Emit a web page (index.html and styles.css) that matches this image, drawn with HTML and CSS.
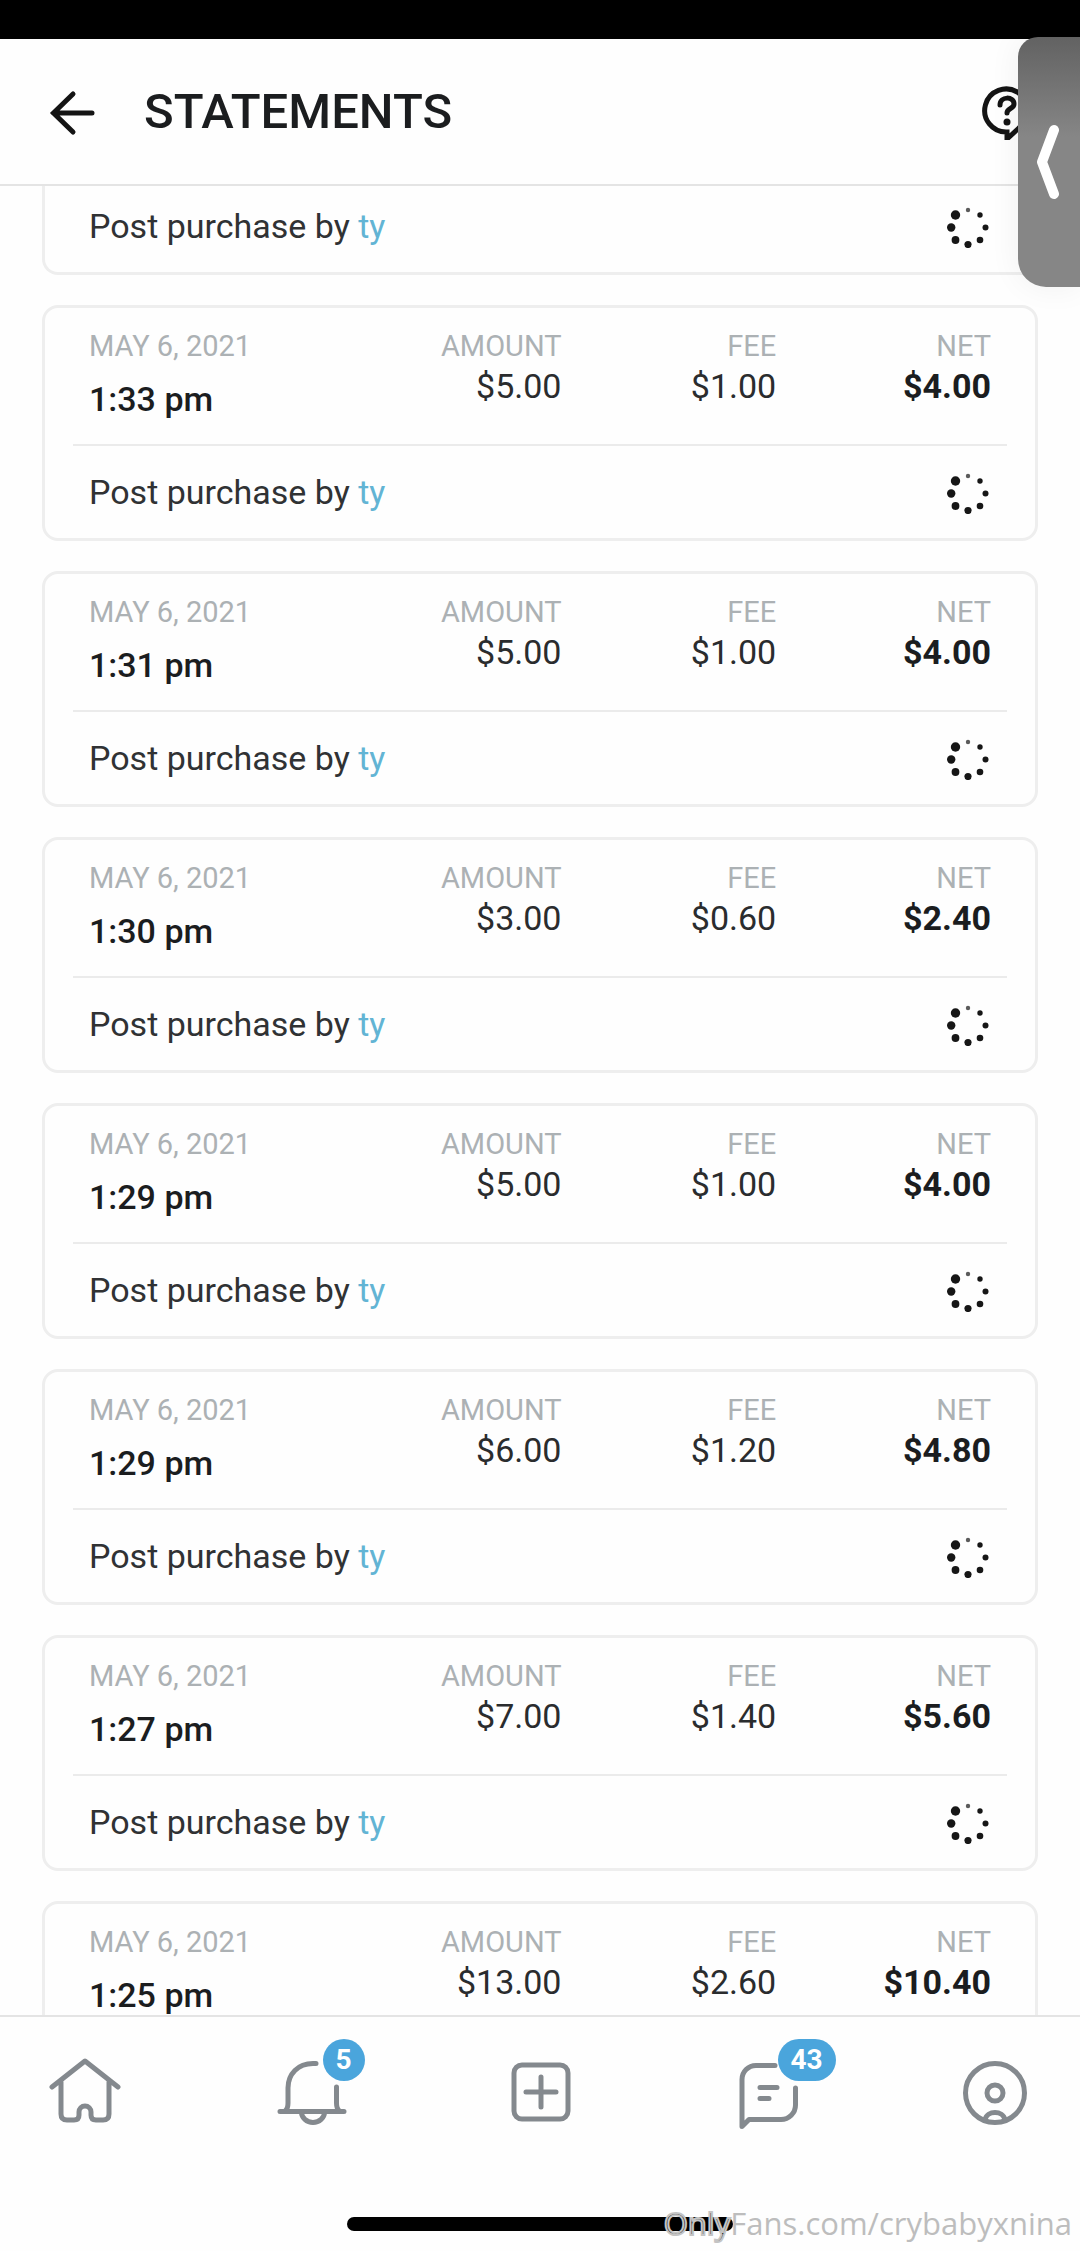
FILE: index.html
```html
<!DOCTYPE html>
<html lang="en">
<head>
<meta charset="utf-8">
<meta name="viewport" content="width=device-width, initial-scale=1">
<title>Statements</title>
<link rel="stylesheet" href="styles.css">
</head>
<body>
<svg class="sprite" aria-hidden="true">
  <symbol id="spinner" viewBox="0 0 44 44">
    <circle cx="21" cy="6" r="2.200" opacity=".7"/>
    <circle cx="33" cy="11" r="2.700"/>
    <circle cx="38.500" cy="23.500" r="3"/>
    <circle cx="33" cy="36" r="3.300"/>
    <circle cx="21" cy="40.500" r="3.600"/>
    <circle cx="8.500" cy="36" r="3.900"/>
    <circle cx="4.200" cy="23.500" r="4.200"/>
    <circle cx="8.500" cy="11" r="4.700"/>
  </symbol>
</svg>
<div class="app">
  <div class="status-bar"></div>
  <header class="header">
    <button class="icon-button" aria-label="Back">
      <svg class="header-icon" viewBox="0 0 56 56"><path d="M47 29H8.500M28 10 8.500 29 28 48"/></svg>
    </button>
    <h1 class="title">STATEMENTS</h1>
    <button class="icon-button" aria-label="Help">
      <svg class="header-icon" viewBox="0 0 56 56"><path d="M28 48A21.500 21.500 0 1 1 41 43L28 55z"/><path d="M21 21C21 12 35 12 35 20C35 25 28 24 28 29"/><circle class="dot" cx="28" cy="38" r="3.500"/></svg>
    </button>
  </header>

  <main class="statements">
    <article class="card card-scrolled">
      <div class="card-foot"><p>Post purchase by <a href="#">ty</a></p><svg class="spinner"><use href="#spinner"/></svg></div>
    </article>
    <article class="card">
      <dl class="card-head">
        <div class="when"><dt>MAY 6, 2021</dt><dd>1:33 pm</dd></div>
        <div class="sum"><dt>AMOUNT</dt><dd>$5.00</dd></div>
        <div class="sum"><dt>FEE</dt><dd>$1.00</dd></div>
        <div class="sum net"><dt>NET</dt><dd>$4.00</dd></div>
      </dl>
      <div class="card-foot"><p>Post purchase by <a href="#">ty</a></p><svg class="spinner"><use href="#spinner"/></svg></div>
    </article>
    <article class="card">
      <dl class="card-head">
        <div class="when"><dt>MAY 6, 2021</dt><dd>1:31 pm</dd></div>
        <div class="sum"><dt>AMOUNT</dt><dd>$5.00</dd></div>
        <div class="sum"><dt>FEE</dt><dd>$1.00</dd></div>
        <div class="sum net"><dt>NET</dt><dd>$4.00</dd></div>
      </dl>
      <div class="card-foot"><p>Post purchase by <a href="#">ty</a></p><svg class="spinner"><use href="#spinner"/></svg></div>
    </article>
    <article class="card">
      <dl class="card-head">
        <div class="when"><dt>MAY 6, 2021</dt><dd>1:30 pm</dd></div>
        <div class="sum"><dt>AMOUNT</dt><dd>$3.00</dd></div>
        <div class="sum"><dt>FEE</dt><dd>$0.60</dd></div>
        <div class="sum net"><dt>NET</dt><dd>$2.40</dd></div>
      </dl>
      <div class="card-foot"><p>Post purchase by <a href="#">ty</a></p><svg class="spinner"><use href="#spinner"/></svg></div>
    </article>
    <article class="card">
      <dl class="card-head">
        <div class="when"><dt>MAY 6, 2021</dt><dd>1:29 pm</dd></div>
        <div class="sum"><dt>AMOUNT</dt><dd>$5.00</dd></div>
        <div class="sum"><dt>FEE</dt><dd>$1.00</dd></div>
        <div class="sum net"><dt>NET</dt><dd>$4.00</dd></div>
      </dl>
      <div class="card-foot"><p>Post purchase by <a href="#">ty</a></p><svg class="spinner"><use href="#spinner"/></svg></div>
    </article>
    <article class="card">
      <dl class="card-head">
        <div class="when"><dt>MAY 6, 2021</dt><dd>1:29 pm</dd></div>
        <div class="sum"><dt>AMOUNT</dt><dd>$6.00</dd></div>
        <div class="sum"><dt>FEE</dt><dd>$1.20</dd></div>
        <div class="sum net"><dt>NET</dt><dd>$4.80</dd></div>
      </dl>
      <div class="card-foot"><p>Post purchase by <a href="#">ty</a></p><svg class="spinner"><use href="#spinner"/></svg></div>
    </article>
    <article class="card">
      <dl class="card-head">
        <div class="when"><dt>MAY 6, 2021</dt><dd>1:27 pm</dd></div>
        <div class="sum"><dt>AMOUNT</dt><dd>$7.00</dd></div>
        <div class="sum"><dt>FEE</dt><dd>$1.40</dd></div>
        <div class="sum net"><dt>NET</dt><dd>$5.60</dd></div>
      </dl>
      <div class="card-foot"><p>Post purchase by <a href="#">ty</a></p><svg class="spinner"><use href="#spinner"/></svg></div>
    </article>
    <article class="card">
      <dl class="card-head">
        <div class="when"><dt>MAY 6, 2021</dt><dd>1:25 pm</dd></div>
        <div class="sum"><dt>AMOUNT</dt><dd>$13.00</dd></div>
        <div class="sum"><dt>FEE</dt><dd>$2.60</dd></div>
        <div class="sum net"><dt>NET</dt><dd>$10.40</dd></div>
      </dl>
    </article>
  </main>

  <footer class="bottom">
    <nav class="tabs">
      <a class="tab" href="#" aria-label="Home">
        <svg viewBox="0 0 72 72"><path d="M3 30 36 4l33 26M12 25v32q0 6 6 6h7q5 0 5-5v-3a6 6 0 0 1 12 0v3q0 5 5 5h7q6 0 6-6V25"/></svg>
      </a>
      <a class="tab" href="#" aria-label="Notifications">
        <svg viewBox="0 0 72 72"><path d="M39 6.500h-3C21 6.500 11 17 11 31v15q0 6-3 8M59.500 30v16q0 6 3 8M3 54.500h64M24.500 55a11.500 10.500 0 0 0 23 0"/></svg>
        <span class="badge">5</span>
      </a>
      <a class="tab" href="#" aria-label="New post">
        <svg viewBox="0 0 72 72"><rect x="10" y="8" width="54" height="54" rx="8"/><path d="M37 20v30M22 35h30"/></svg>
      </a>
      <a class="tab" href="#" aria-label="Messages">
        <svg viewBox="0 0 72 72"><path d="M43 8.500H24a14 14 0 0 0-14 14V69.500l7-7h32A14.500 14.500 0 0 0 63.500 48V31M28 30.500h17M28 41.500h9"/></svg>
        <span class="badge">43</span>
      </a>
      <a class="tab" href="#" aria-label="Profile">
        <svg viewBox="0 0 72 72"><circle cx="36" cy="36" r="29.500"/><circle cx="36" cy="36" r="8"/><path d="M26 63C28 53 44 53 46 63"/></svg>
      </a>
    </nav>
    <div class="home-indicator"></div>
    <span class="watermark"><span class="watermark-dark">Only</span>Fans.com/crybabyxnina</span>
  </footer>

  <button class="side-tab" aria-label="Open panel">
    <svg viewBox="0 0 24 76"><path d="M17 6 5 38l12 32"/></svg>
  </button>
</div>
</body>
</html>
```
FILE: styles.css
```css
* {
  box-sizing: border-box;
}

body,
h1,
p,
dl,
dd {
  margin: 0;
}

body {
  background: #fefefe;
  color: #1b1d1f;
  font-family: Roboto, "Liberation Sans", sans-serif;
  font-size: 34px;
  line-height: 40px;
}

button {
  padding: 0;
  border: 0;
  background: none;
}

.sprite {
  position: absolute;
  width: 0;
  height: 0;
}

.app {
  position: relative;
  display: flex;
  flex-direction: column;
  height: 100vh;
  overflow: hidden;
}

.status-bar {
  flex: none;
  height: 39px;
  background: #000;
}

.header {
  flex: none;
  display: flex;
  align-items: center;
  gap: 43px;
  padding: 45px 45px 44px;
  border-bottom: 2px solid #e4e4e4;
}

.title {
  flex: 1;
  font-size: 49px;
  font-weight: 500;
  line-height: 56px;
}

.icon-button {
  display: flex;
}

.header-icon {
  width: 56px;
  height: 56px;
  fill: none;
  stroke: #141414;
  stroke-width: 5;
  stroke-linecap: round;
}

.header-icon .dot {
  fill: #141414;
  stroke: none;
}

/* Statement list */
.statements {
  flex: 1;
  min-height: 0;
  overflow: hidden;
  display: flex;
  flex-direction: column;
  gap: 30px;
  padding: 0 42px;
}

.card {
  flex: none;
  padding: 0 28px;
  border: 3px solid #eeeeee;
  border-radius: 16px;
}

.card-scrolled {
  margin-top: -6px;
  border-top: 0;
  border-radius: 0 0 16px 16px;
}

.card-head {
  display: grid;
  grid-template-columns: 6fr 5fr 5fr 5fr;
  padding: 21px 16px 25px;
  border-bottom: 2px solid #ebebeb;
}

.card-head dt {
  color: #acb1b4;
  font-size: 29px;
  line-height: 34px;
}

.when dd {
  margin-top: 16px;
  font-weight: 500;
}

.sum {
  text-align: right;
}

.sum dd {
  margin-top: 3px;
  color: #2a2c2e;
}

.net dd {
  color: #1b1d1f;
  font-weight: 700;
}

.card-foot {
  display: flex;
  align-items: center;
  justify-content: space-between;
  padding: 24px 16px;
  color: #303234;
}

.card-foot a {
  color: #62b4d4;
  text-decoration: none;
}

.spinner {
  width: 44px;
  height: 44px;
  fill: #161616;
}

/* Bottom navigation */
.bottom {
  position: relative;
  flex: none;
  display: flex;
  flex-direction: column;
  align-items: center;
  gap: 88px;
  padding: 40px 49px 20px;
  border-top: 2px solid #e4e4e4;
}

.tabs {
  display: flex;
  justify-content: space-between;
  width: 100%;
}

.tab {
  position: relative;
  display: block;
  width: 72px;
  height: 72px;
}

.tab svg {
  display: block;
  fill: none;
  stroke: #84898e;
  stroke-width: 5;
  stroke-linecap: round;
  stroke-linejoin: round;
}

.badge {
  position: absolute;
  top: -18px;
  left: 46px;
  min-width: 42px;
  padding: 0 13px;
  border-radius: 21px;
  background: #4aa5dc;
  color: #fff;
  font-size: 28px;
  font-weight: 700;
  line-height: 42px;
  text-align: center;
}

.home-indicator {
  width: 386px;
  height: 14px;
  border-radius: 7px;
  background: #000;
}

.watermark {
  position: absolute;
  right: 8px;
  bottom: 8px;
  color: #bdbdbd;
  font-family: "Open Sans", "Noto Sans", sans-serif;
  font-size: 31px;
}

/* Letters that cross the home indicator are dark with a pale edge */
.watermark-dark {
  color: #111;
  -webkit-text-stroke: 2px #c4c4c4;
}

/* Pull-out handle over the right edge */
.side-tab {
  position: absolute;
  top: 37px;
  right: 0;
  display: flex;
  align-items: center;
  justify-content: center;
  width: 62px;
  height: 250px;
  border-radius: 20px 0 0 28px;
  background: linear-gradient(#626262, #868686 40%);
  box-shadow: 0 0 32px rgba(0, 0, 0, 0.06);
}

.side-tab svg {
  width: 24px;
  height: 76px;
  fill: none;
  stroke: #fff;
  stroke-width: 10;
  stroke-linecap: round;
  stroke-linejoin: round;
}
```
